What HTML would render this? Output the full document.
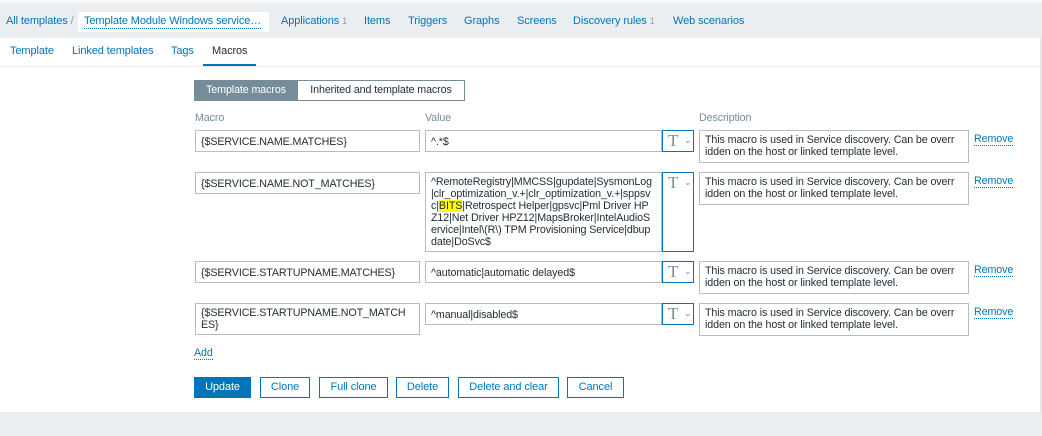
<!DOCTYPE html>
<html><head><meta charset="utf-8"><style>
*{box-sizing:border-box;margin:0;padding:0}
body{width:1042px;height:436px;background:#ebeef0;font-family:"Liberation Sans",Arial,sans-serif;font-size:10.7px;letter-spacing:-0.1px;color:#1f2c33;position:relative;overflow:hidden}
.a{position:absolute;white-space:nowrap}
.n{font-size:11px;top:15px}
.l{color:#0275b8}
.c{color:#768d99}
.box{position:absolute;background:#fff;border:1px solid #bbb;padding:3px 5px;line-height:12px;color:#1f2c33;white-space:nowrap;overflow:hidden}
.tb{position:absolute;border:1px solid #0275b8;background:#fff;width:32px;height:22px}
.tb span{position:absolute;left:5px;top:0;font-family:"Liberation Serif",serif;font-size:17px;color:#768d99}
.tb i{position:absolute;left:21px;top:4px;font-style:normal;font-size:9px;color:#768d99}
.rm{color:#0275b8;border-bottom:1px dotted #0275b8;line-height:12px}
.btn{position:absolute;top:377px;height:21px;border:1px solid #0275b8;background:#fff;color:#0275b8;font-size:11px;line-height:19px;text-align:center}
</style></head><body>
<div class="a" style="left:0;top:0;width:1042px;height:3px;background:#f8f8f8"></div>
<div class="a" style="left:0;top:38px;width:1041px;height:374px;background:#fff;border-right:1px solid #dfe4e7"></div>
<div class="a" style="left:0;top:66px;width:1041px;height:1px;background:#ebeef0"></div>
<div class="a l n" style="left:6px">All templates <span style="color:#999">/</span></div>
<div class="a" style="left:78px;top:12px;width:191px;height:20px;background:#fff"></div>
<div class="a l n" style="left:84px;border-bottom:1px dotted #0275b8;line-height:13px">Template Module Windows service…</div>
<div class="a l n" style="left:281px">Applications <span style="color:#999;font-size:9px">1</span></div>
<div class="a l n" style="left:364px">Items</div>
<div class="a l n" style="left:408px">Triggers</div>
<div class="a l n" style="left:464px">Graphs</div>
<div class="a l n" style="left:517px">Screens</div>
<div class="a l n" style="left:573px">Discovery rules <span style="color:#999;font-size:9px">1</span></div>
<div class="a l n" style="left:673px">Web scenarios</div>
<div class="a l n" style="left:10px;top:45px">Template</div>
<div class="a l n" style="left:72px;top:45px">Linked templates</div>
<div class="a l n" style="left:171px;top:45px">Tags</div>
<div class="a n" style="left:212px;top:45px">Macros</div>
<div class="a" style="left:203px;top:64px;width:53px;height:2px;background:#0275b8"></div>
<div class="a" style="left:194px;top:80px;width:104px;height:21px;background:#768d99;color:#fff;line-height:21px;text-align:center">Template macros</div>
<div class="a" style="left:297px;top:80px;width:168px;height:21px;border:1px solid #768d99;line-height:19px;text-align:center">Inherited and template macros</div>
<div class="a c" style="left:195px;top:112px">Macro</div>
<div class="a c" style="left:425px;top:112px">Value</div>
<div class="a c" style="left:699px;top:112px">Description</div>

<div class="box" style="left:195px;top:130px;width:225px;height:22px;padding-top:5px">{$SERVICE.NAME.MATCHES}</div>
<div class="box" style="left:425px;top:130px;width:237px;height:22px;padding-top:5px">^.*$</div>
<div class="tb" style="left:662px;top:130px"><span>T</span><i>⌄</i></div>
<div class="box" style="left:699px;top:130px;width:270px;height:33px">This macro is used in Service discovery. Can be overr<br>idden on the host or linked template level.</div>
<div class="a rm" style="left:974px;top:133px">Remove</div>

<div class="box" style="left:195px;top:172px;width:225px;height:22px;padding-top:5px">{$SERVICE.NAME.NOT_MATCHES}</div>
<div class="box" style="left:425px;top:172px;width:237px;height:80px">^RemoteRegistry|MMCSS|gupdate|SysmonLog<br>|clr_optimization_v.+|clr_optimization_v.+|sppsv<br>c|<span style="background:#ff0">BITS</span>|Retrospect Helper|gpsvc|Pml Driver HP<br>Z12|Net Driver HPZ12|MapsBroker|IntelAudioS<br>ervice|Intel\(R\) TPM Provisioning Service|dbup<br>date|DoSvc$</div>
<div class="tb" style="left:662px;top:172px;height:80px"><span>T</span><i>⌄</i></div>
<div class="box" style="left:699px;top:172px;width:270px;height:33px">This macro is used in Service discovery. Can be overr<br>idden on the host or linked template level.</div>
<div class="a rm" style="left:974px;top:175px">Remove</div>

<div class="box" style="left:195px;top:261px;width:225px;height:22px;padding-top:5px">{$SERVICE.STARTUPNAME.MATCHES}</div>
<div class="box" style="left:425px;top:261px;width:237px;height:22px;padding-top:5px">^automatic|automatic delayed$</div>
<div class="tb" style="left:662px;top:261px"><span>T</span><i>⌄</i></div>
<div class="box" style="left:699px;top:261px;width:270px;height:33px">This macro is used in Service discovery. Can be overr<br>idden on the host or linked template level.</div>
<div class="a rm" style="left:974px;top:264px">Remove</div>

<div class="box" style="left:195px;top:303px;width:225px;height:32px">{$SERVICE.STARTUPNAME.NOT_MATCH<br>ES}</div>
<div class="box" style="left:425px;top:303px;width:237px;height:22px;padding-top:5px">^manual|disabled$</div>
<div class="tb" style="left:662px;top:303px"><span>T</span><i>⌄</i></div>
<div class="box" style="left:699px;top:303px;width:270px;height:33px">This macro is used in Service discovery. Can be overr<br>idden on the host or linked template level.</div>
<div class="a rm" style="left:974px;top:306px">Remove</div>

<div class="a rm" style="left:194px;top:347px">Add</div>

<div class="btn" style="left:194px;width:57px;background:#0275b8;color:#fff">Update</div>
<div class="btn" style="left:260px;width:50px">Clone</div>
<div class="btn" style="left:319px;width:69px">Full clone</div>
<div class="btn" style="left:396px;width:53px">Delete</div>
<div class="btn" style="left:458px;width:101px">Delete and clear</div>
<div class="btn" style="left:567px;width:57px">Cancel</div>
</body></html>
